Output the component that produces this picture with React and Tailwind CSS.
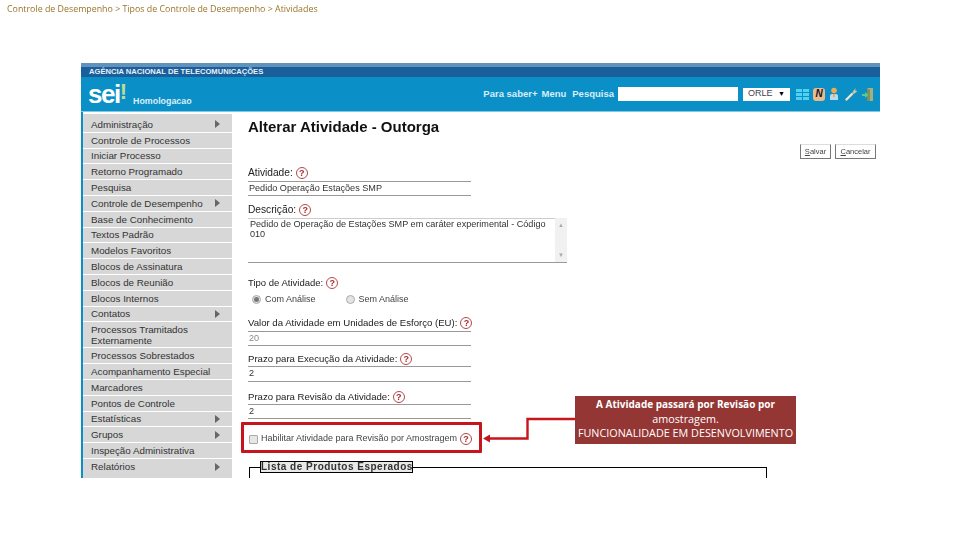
const menu = [
  ["Administração", true], ["Controle de Processos"], ["Iniciar Processo"], ["Retorno Programado"], ["Pesquisa"],
  ["Controle de Desempenho", true], ["Base de Conhecimento"], ["Textos Padrão"], ["Modelos Favoritos"],
  ["Blocos de Assinatura"], ["Blocos de Reunião"], ["Blocos Internos"], ["Contatos", true],
  ["Processos Tramitados Externamente", false, true], ["Processos Sobrestados"], ["Acompanhamento Especial"],
  ["Marcadores"], ["Pontos de Controle"], ["Estatísticas", true], ["Grupos", true], ["Inspeção Administrativa"], ["Relatórios", true],
];

function Help() {
  return (
    <span className="inline-flex h-[12px] w-[12px] shrink-0 items-center justify-center rounded-full border border-[#b5474a] bg-white text-[9px] font-bold leading-none text-[#a8282c]">?</span>
  );
}

function Label({ children, className = "" }) {
  return (
    <div className={"flex h-[14px] items-center gap-[3px] text-[#222] " + className}>
      <span>{children}</span>
      <Help />
    </div>
  );
}

function Field({ value, className = "" }) {
  return (
    <div className={"flex w-[223px] items-center border-y border-[#999] pl-[1px] text-[9.100px] text-[#333] " + className}>
      {value}
    </div>
  );
}

function Radio({ on, label, className = "" }) {
  return (
    <div className={"flex items-center gap-[4px] text-[9px] text-[#444] " + className}>
      <span className="flex h-[9px] w-[9px] items-center justify-center rounded-full border border-[#aaa] bg-[#e4e4e4]">
        {on && <span className="h-[5px] w-[5px] rounded-full bg-[#777]" />}
      </span>
      {label}
    </div>
  );
}

function TopIcons() {
  return (
    <div className="ml-[6px] flex items-center">
      <svg width="13" height="13" viewBox="0 0 13 13">
        <g fill="#4fd2f2">
          <rect x="0" y="1" width="6" height="3" /><rect x="7" y="1" width="6" height="3" />
          <rect x="0" y="5" width="6" height="3" /><rect x="7" y="5" width="6" height="3" />
          <rect x="0" y="9" width="6" height="3" /><rect x="7" y="9" width="6" height="3" />
        </g>
      </svg>
      <span className="ml-[4px] flex h-[13px] w-[12px] items-center justify-center rounded-[3px] bg-[#eab98a] text-[10px] font-bold italic leading-none text-[#15152a]">N</span>
      <svg className="ml-[4px]" width="10" height="14" viewBox="0 0 10 14">
        <circle cx="5" cy="3.500" r="2.800" fill="#eeaa55" />
        <path d="M1 13 V9 Q1 7 3 7 H7 Q9 7 9 9 V13 Z" fill="#b9d9ee" />
        <rect x="4" y="7" width="2" height="3" fill="#eeaa55" />
      </svg>
      <svg className="ml-[6px]" width="13" height="14" viewBox="0 0 13 14">
        <path d="M1.500 12.500 L7 7" stroke="#f0e4c8" strokeWidth="2.400" strokeLinecap="round" />
        <path d="M6.500 7.500 L8.500 3.500 L11 1 L10 3.500 L12.500 4 L9.500 6.500 Z" fill="#d8c49a" />
      </svg>
      <svg className="ml-[4px]" width="11" height="15" viewBox="0 0 11 15">
        <rect x="5" y="1" width="6" height="13" fill="#a8b07a" />
        <path d="M5 1 L8 3 V14 H5 Z" fill="#7f9060" />
        <path d="M0 7 H3 V5 L6.500 8 L3 11 V9 H0 Z" fill="#5fc98a" />
      </svg>
    </div>
  );
}

function Form() {
  return (
    <div className="min-w-0 flex-1 pl-[16px] font-['Liberation_Sans',Arial,sans-serif]">
      <div className="h-[32px] pt-[5px]">
        <h1 className="text-[15px] font-bold leading-[20px] text-[#111]">Alterar Atividade - Outorga</h1>
      </div>
      <div className="flex justify-end gap-[4px] pr-[4px]">
        <span className="flex h-[15px] w-[31px] items-center justify-center border border-x-[#777] border-b-[#777] border-t-[#ddd] text-[7.500px] text-[#444]"><u>S</u>alvar</span>
        <span className="flex h-[15px] w-[41px] items-center justify-center border border-x-[#777] border-b-[#777] border-t-[#ddd] text-[7.500px] text-[#444]"><u>C</u>ancelar</span>
      </div>
      <Label className="mt-[7px] text-[10.200px]">Atividade:</Label>
      <Field value="Pedido Operação Estações SMP" className="mt-[1px] h-[15px]" />
      <Label className="mt-[7px] text-[10.200px]">Descrição:</Label>
      <div className="mt-[1px] flex h-[45px] w-[319px] border-b border-[#999]">
        <div className="flex-1 border-t border-[#ccc] pl-[2px] pr-[6px] text-[9.100px] leading-[10px] text-[#333]">
          Pedido de Operação de Estações SMP em caráter experimental - Código 010
        </div>
        <div className="flex w-[12px] flex-col items-center justify-between bg-[#f1f1f1] py-[4px] text-[6px] leading-none text-[#aaa]">
          <span>▲</span><span>▼</span>
        </div>
      </div>
      <Label className="mt-[13px] text-[9.500px] font-medium">Tipo de Atividade:</Label>
      <div className="mt-[3px] flex h-[13px] items-center">
        <Radio on label="Com Análise" className="ml-[4px]" />
        <Radio label="Sem Análise" className="ml-[30px]" />
      </div>
      <Label className="mt-[10px] text-[9.600px]">Valor da Atividade em Unidades de Esforço (EU):</Label>
      <Field value="20" className="mt-[1px] h-[15px] text-[#888]" />
      <Label className="mt-[6px] text-[9.600px]">Prazo para Execução da Atividade:</Label>
      <Field value="2" className="h-[16px]" />
      <Label className="mt-[8px] text-[9.600px]">Prazo para Revisão da Atividade:</Label>
      <Field value="2" className="h-[15px]" />
      <div className="mt-[13px] flex h-[14px] items-center gap-[3px] pl-[1px] text-[9px] text-[#444]">
        <span className="h-[9px] w-[9px] rounded-[1px] border border-[#aaa] bg-[#e6e6e6]" />
        <span>Habilitar Atividade para Revisão por Amostragem</span>
        <Help />
      </div>
      <div className="relative ml-[1px] mt-[21px] h-[20px] w-[518px] border-x border-t border-black">
        <div className="absolute left-[10px] top-[-7px] h-[12px] w-[153px] whitespace-nowrap border border-black bg-[#e8e8e8] text-center text-[10px] font-bold leading-[10px] tracking-[0.5px] text-[#333]">
          Lista de Produtos Esperados
        </div>
      </div>
    </div>
  );
}

export default function App() {
  return (
    <div className="relative h-[540px] w-[960px] overflow-hidden bg-white">
      <div className="h-[63px] pl-[7px] pt-[3px] font-['Open_Sans',sans-serif] text-[8.850px] leading-[12px] text-[#9a7428] blur-[0.3px]">
        Controle de Desempenho &gt; Tipos de Controle de Desempenho &gt; Atividades
      </div>
      <div className="ml-[81px] flex h-[415px] w-[799px] flex-col overflow-hidden font-['Liberation_Sans',Arial,sans-serif] blur-[0.35px]">
        <div className="h-[4px] bg-[#5f92bd]" />
        <div className="flex h-[10px] items-center bg-[#1a5f9c] pl-[8px] text-[7.600px] font-bold leading-none text-[#e8f0f6]">
          AGÊNCIA NACIONAL DE TELECOMUNICAÇÕES
        </div>
        <div className="flex h-[34px] items-center bg-[#0a8fc7] pr-[7px] text-white">
          <div className="flex items-end pl-[7px]">
            <span className="mb-[2px] text-[26px] font-bold leading-[28px] tracking-[-1.500px]">sei</span>
            <span className="mb-[5px] text-[22px] font-bold leading-[26px] text-[#b9dc9a]">!</span>
            <span className="mb-[3px] ml-[6px] text-[8.900px] font-bold leading-[12px] text-[#d8eef8]">Homologacao</span>
          </div>
          <div className="ml-auto flex items-center text-[9.500px] font-bold text-[#d8eef8]">
            <span>Para saber+</span>
            <span className="ml-[4px]">Menu</span>
            <span className="ml-[6px]">Pesquisa</span>
            <div className="ml-[4px] h-[14px] w-[120px] bg-white" />
            <div className="ml-[5px] flex h-[13px] w-[47px] items-center justify-between bg-white px-[5px] text-[9px] font-normal text-[#445]">
              <span>ORLE</span><span className="text-[7px] text-black">▼</span>
            </div>
            <TopIcons />
          </div>
        </div>
        <div className="flex min-h-0 flex-1 border-t border-[#7fcbe6]">
          <div className="flex w-[151px] shrink-0 flex-col border-l-[2px] border-[#0a8fc7] pt-[2px]">
            <div className="h-[364px] w-[149px] overflow-hidden bg-[#d7d7d7] pt-[3px]">
              {menu.map(([t, arrow, tall]) => (
                <div key={t} className={"flex items-center justify-between border-b border-white pl-[8px] pr-[12px] text-[9.800px] leading-[11px] text-[#333] last:border-b-0 " + (tall ? "h-[26px]" : "h-[15.800px]")}>
                  <span className={tall ? "w-[110px]" : ""}>{t}</span>
                  {arrow && <span className="h-0 w-0 border-y-[4px] border-l-[5px] border-y-transparent border-l-[#666]" />}
                </div>
              ))}
            </div>
          </div>
          <Form />
        </div>
      </div>

      {/* annotation overlay */}
      <div className="absolute left-[241px] top-[422px] h-[31px] w-[241px] rounded-[1px] border-[3px] border-[#c5161d]" />
      <svg className="absolute left-[481px] top-[415px]" width="96" height="32" viewBox="0 0 96 32">
        <path d="M94 4 H46.500 V23.500 H8" fill="none" stroke="#c5161d" strokeWidth="2.400" />
        <path d="M2 23.500 L9 19.500 V27.500 Z" fill="#c5161d" />
      </svg>
      <div className="absolute left-[575px] top-[396px] flex h-[48px] w-[221px] flex-col items-center bg-[#943634] pt-[1px] font-['Open_Sans',sans-serif] text-[10.800px] leading-[14.500px] text-white">
        <span className="text-[10px] font-bold">A Atividade passará por Revisão por</span>
        <span>amostragem.</span>
        <span className="whitespace-nowrap">FUNCIONALIDADE EM DESENVOLVIMENTO</span>
      </div>
    </div>
  );
}
